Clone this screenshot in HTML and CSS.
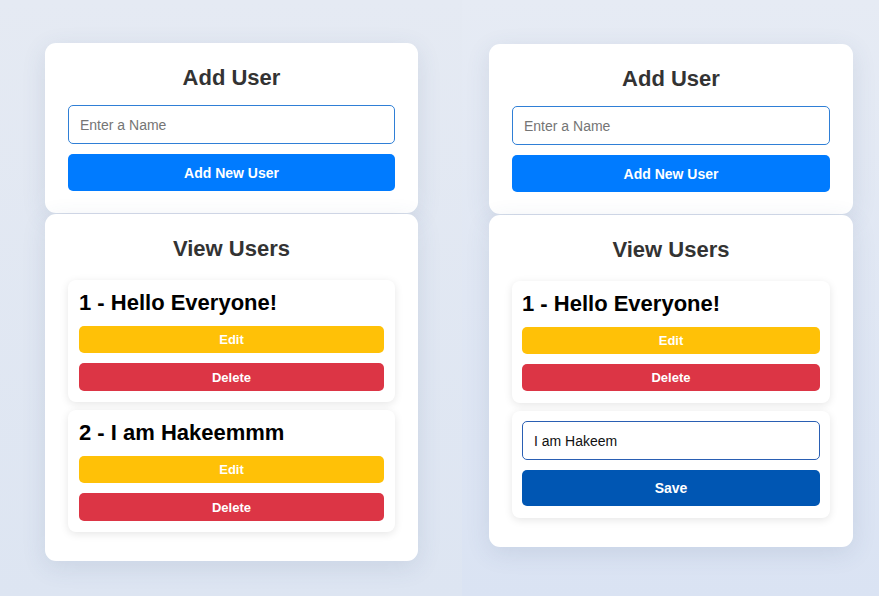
FILE: index.html
```html
<!DOCTYPE html>
<html>
<head>
<meta charset="utf-8">
<link rel="stylesheet" href="styles.css">
</head>
<body>
<div class="shots">
  <div class="panel panel-left">
    <div class="card">
      <h2 class="card-title">Add User</h2>
      <input class="field" type="text" placeholder="Enter a Name">
      <button class="btn btn-primary">Add New User</button>
    </div>
    <div class="card card-list">
      <h2 class="card-title">View Users</h2>
      <div class="item">
        <h3 class="item-title">1 - Hello Everyone!</h3>
        <button class="btn btn-sm btn-edit">Edit</button>
        <button class="btn btn-sm btn-delete">Delete</button>
      </div>
      <div class="item">
        <h3 class="item-title">2 - I am Hakeemmm</h3>
        <button class="btn btn-sm btn-edit">Edit</button>
        <button class="btn btn-sm btn-delete">Delete</button>
      </div>
    </div>
  </div>
  <div class="panel panel-right">
    <div class="card">
      <h2 class="card-title">Add User</h2>
      <input class="field" type="text" placeholder="Enter a Name">
      <button class="btn btn-primary">Add New User</button>
    </div>
    <div class="card card-list">
      <h2 class="card-title">View Users</h2>
      <div class="item">
        <h3 class="item-title">1 - Hello Everyone!</h3>
        <button class="btn btn-sm btn-edit">Edit</button>
        <button class="btn btn-sm btn-delete">Delete</button>
      </div>
      <div class="item item-editing">
        <input class="field field-edit" type="text" value="I am Hakeem">
        <button class="btn btn-save">Save</button>
      </div>
    </div>
  </div>
</div>
</body>
</html>
```

FILE: styles.css
```css
* { box-sizing: border-box; }

html, body {
  margin: 0;
  height: 100%;
}

body {
  font-family: "Liberation Sans", Arial, sans-serif;
  background: linear-gradient(180deg, #e6ebf4 0%, #dfe6f3 60%, #dbe4f4 100%);
  overflow: hidden;
}

.shots {
  display: flex;
  height: 596px;
}

.panel {
  display: flex;
  flex-direction: column;
  gap: 1px;
}

.panel-left {
  width: 462px;
  padding: 43px 44px 0 45px;
  background: linear-gradient(180deg, #e5eaf3 0%, #dde5f2 100%);
}

.panel-right {
  width: 417px;
  padding: 44px 26px 0 27px;
  background: linear-gradient(180deg, #e6ebf4 0%, #dae3f3 100%);
}

.card {
  background: #fff;
  border-radius: 11px;
  padding: 22px 23px 22px;
  display: flex;
  flex-direction: column;
  box-shadow: 0 6px 24px rgba(60, 80, 120, 0.12);
}

.card-list {
  padding-bottom: 21px;
}

.card-title {
  margin: 0 0 14px;
  font-size: 22px;
  line-height: 26px;
  font-weight: 700;
  color: #333;
  text-align: center;
}

.card-list .card-title {
  margin-bottom: 18px;
}

.field {
  height: 39px;
  border: 1px solid #2f7fd6;
  border-radius: 5px;
  padding: 0 11px;
  font-family: "Liberation Sans", Arial, sans-serif;
  font-size: 14px;
  color: #111;
  background: #fff;
  outline: none;
}

.field::placeholder {
  color: #757575;
}

.btn {
  border: none;
  border-radius: 5px;
  color: #fff;
  font-family: "Liberation Sans", Arial, sans-serif;
  font-weight: 700;
  cursor: pointer;
  padding: 0;
}

.btn-primary {
  margin-top: 10px;
  height: 37px;
  background: #007bff;
  font-size: 14px;
}

.item {
  background: #fff;
  border-radius: 8px;
  padding: 10px 11px 11px;
  margin-bottom: 8px;
  display: flex;
  flex-direction: column;
  box-shadow: 0 2px 9px rgba(0, 0, 0, 0.1);
}

.item-title {
  margin: 0 0 10px;
  font-size: 22px;
  line-height: 26px;
  font-weight: 700;
  color: #000;
}

.btn-sm {
  height: 28px;
  font-size: 13px;
}

.btn-edit {
  background: #ffc107;
  height: 27px;
  margin-bottom: 10px;
}

.btn-delete {
  background: #dc3545;
}

.panel-right .item {
  padding: 10px 10px 12px;
}

.panel-right .btn-delete {
  height: 27px;
}

.panel-right .item-editing {
  padding-bottom: 12px;
}

.field-edit {
  border-color: #2a5fb3;
  font-size: 14px;
  color: #111;
}

.btn-save {
  margin-top: 10px;
  height: 36px;
  background: #0056b3;
  font-size: 14px;
}
```
